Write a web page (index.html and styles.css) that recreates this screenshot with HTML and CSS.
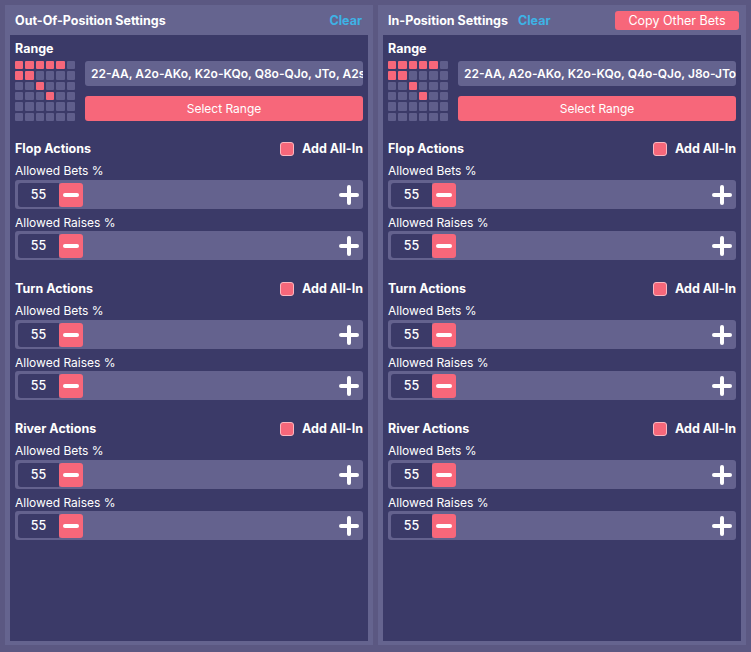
FILE: index.html
```html
<!DOCTYPE html>
<html lang="en">
<head>
    <meta charset="UTF-8">
    <meta name="viewport" content="width=device-width, initial-scale=1.0">
    <title>Solver Settings</title>
    <link rel="stylesheet" href="styles.css">
</head>
<body>
<div class="page">
    <!-- 左侧：OOP -->
    <div class="panel">
        <div class="panel-head">
            <span class="panel-title">Out-Of-Position Settings</span>
            <span class="spacer"></span>
            <a class="clear">Clear</a>
        </div>
        <div class="panel-body">
            <div class="range">
                <div class="label-bold">Range</div>
                <div class="range-row">
                    <div class="mini-grid">
                        <i class="on"></i><i class="on"></i><i class="on"></i><i class="on"></i><i class="on"></i><i></i>
                        <i class="on"></i><i class="on"></i><i></i><i></i><i></i><i></i>
                        <i></i><i></i><i class="on"></i><i></i><i></i><i></i>
                        <i></i><i></i><i></i><i class="on"></i><i></i><i></i>
                        <i></i><i></i><i></i><i></i><i></i><i></i>
                        <i></i><i></i><i></i><i></i><i></i><i></i>
                    </div>
                    <div class="range-side">
                        <div class="range-text"><span>22-AA, A2o-AKo, K2o-KQo, Q8o-QJo, JTo, A2s</span></div>
                        <button class="btn">Select Range</button>
                    </div>
                </div>
            </div>

            <div class="street">
                <div class="street-head">
                    <span class="label-bold">Flop Actions</span>
                    <span class="spacer"></span>
                    <span class="check"></span><span class="label-bold">Add All-In</span>
                </div>
                <div class="field-label">Allowed Bets %</div>
                <div class="stepper"><span class="num">55</span><span class="minus"></span><span class="spacer"></span><span class="plus"></span></div>
                <div class="field-label">Allowed Raises %</div>
                <div class="stepper"><span class="num">55</span><span class="minus"></span><span class="spacer"></span><span class="plus"></span></div>
            </div>

            <div class="street">
                <div class="street-head">
                    <span class="label-bold">Turn Actions</span>
                    <span class="spacer"></span>
                    <span class="check"></span><span class="label-bold">Add All-In</span>
                </div>
                <div class="field-label">Allowed Bets %</div>
                <div class="stepper"><span class="num">55</span><span class="minus"></span><span class="spacer"></span><span class="plus"></span></div>
                <div class="field-label">Allowed Raises %</div>
                <div class="stepper"><span class="num">55</span><span class="minus"></span><span class="spacer"></span><span class="plus"></span></div>
            </div>

            <div class="street">
                <div class="street-head">
                    <span class="label-bold">River Actions</span>
                    <span class="spacer"></span>
                    <span class="check"></span><span class="label-bold">Add All-In</span>
                </div>
                <div class="field-label">Allowed Bets %</div>
                <div class="stepper"><span class="num">55</span><span class="minus"></span><span class="spacer"></span><span class="plus"></span></div>
                <div class="field-label">Allowed Raises %</div>
                <div class="stepper"><span class="num">55</span><span class="minus"></span><span class="spacer"></span><span class="plus"></span></div>
            </div>
        </div>
    </div>

    <!-- 右侧：IP -->
    <div class="panel">
        <div class="panel-head">
            <span class="panel-title">In-Position Settings</span>
            <a class="clear clear-inline">Clear</a>
            <span class="spacer"></span>
            <button class="btn btn-copy">Copy Other Bets</button>
        </div>
        <div class="panel-body">
            <div class="range">
                <div class="label-bold">Range</div>
                <div class="range-row">
                    <div class="mini-grid">
                        <i class="on"></i><i class="on"></i><i class="on"></i><i class="on"></i><i class="on"></i><i></i>
                        <i class="on"></i><i class="on"></i><i></i><i></i><i></i><i></i>
                        <i></i><i></i><i class="on"></i><i></i><i></i><i></i>
                        <i></i><i></i><i></i><i class="on"></i><i></i><i></i>
                        <i></i><i></i><i></i><i></i><i></i><i></i>
                        <i></i><i></i><i></i><i></i><i></i><i></i>
                    </div>
                    <div class="range-side">
                        <div class="range-text"><span>22-AA, A2o-AKo, K2o-KQo, Q4o-QJo, J8o-JTo,</span></div>
                        <button class="btn">Select Range</button>
                    </div>
                </div>
            </div>

            <div class="street">
                <div class="street-head">
                    <span class="label-bold">Flop Actions</span>
                    <span class="spacer"></span>
                    <span class="check"></span><span class="label-bold">Add All-In</span>
                </div>
                <div class="field-label">Allowed Bets %</div>
                <div class="stepper"><span class="num">55</span><span class="minus"></span><span class="spacer"></span><span class="plus"></span></div>
                <div class="field-label">Allowed Raises %</div>
                <div class="stepper"><span class="num">55</span><span class="minus"></span><span class="spacer"></span><span class="plus"></span></div>
            </div>

            <div class="street">
                <div class="street-head">
                    <span class="label-bold">Turn Actions</span>
                    <span class="spacer"></span>
                    <span class="check"></span><span class="label-bold">Add All-In</span>
                </div>
                <div class="field-label">Allowed Bets %</div>
                <div class="stepper"><span class="num">55</span><span class="minus"></span><span class="spacer"></span><span class="plus"></span></div>
                <div class="field-label">Allowed Raises %</div>
                <div class="stepper"><span class="num">55</span><span class="minus"></span><span class="spacer"></span><span class="plus"></span></div>
            </div>

            <div class="street">
                <div class="street-head">
                    <span class="label-bold">River Actions</span>
                    <span class="spacer"></span>
                    <span class="check"></span><span class="label-bold">Add All-In</span>
                </div>
                <div class="field-label">Allowed Bets %</div>
                <div class="stepper"><span class="num">55</span><span class="minus"></span><span class="spacer"></span><span class="plus"></span></div>
                <div class="field-label">Allowed Raises %</div>
                <div class="stepper"><span class="num">55</span><span class="minus"></span><span class="spacer"></span><span class="plus"></span></div>
            </div>
        </div>
    </div>
</div>
</body>
</html>
```

FILE: styles.css
```css
*{margin:0;padding:0;box-sizing:border-box;}
html,body{height:100%;}
body{background:#5b5882;font-family:"Inter","Lato",sans-serif;color:#fff;font-size:13px;}
.page{height:100%;display:flex;gap:5px;padding:5px 5px 7px 5px;}
.spacer{flex:1;}

/* 面板 */
.panel{flex:1 1 0;min-width:0;display:flex;flex-direction:column;background:#65648f;padding:0 5px 4px 5px;}
.panel-head{height:30px;display:flex;align-items:center;padding:0 6px 0 5px;}
.panel-title{font-weight:700;font-size:12.5px;}
.clear{color:#3eb2e5;font-weight:700;font-size:12.5px;cursor:pointer;}
.clear-inline{margin-left:10px;}
.panel-body{flex:1;background:#3b3a68;padding:5px;}

/* 按钮 */
.btn{border:0;background:#f7677a;color:#fff;font-family:inherit;font-size:12px;height:25px;border-radius:3px;cursor:pointer;}
.btn-copy{height:19px;width:124px;font-size:12.5px;margin-right:-4px;}

/* Range */
.label-bold{font-weight:700;font-size:12.5px;line-height:16px;}
.range .label-bold{padding-top:1px;line-height:15px;}
.range-row{display:flex;gap:10px;margin-top:5px;}
.mini-grid{width:60px;height:60px;display:grid;grid-template-columns:repeat(6,1fr);grid-template-rows:repeat(6,1fr);gap:2px;}
.mini-grid i{background:#5f5e8b;border-radius:1px;}
.mini-grid i.on{background:#f7677a;}
.range-side{flex:1;min-width:0;display:flex;flex-direction:column;gap:10px;}
.range-text{height:25px;line-height:25px;background:#64638f;border-radius:3px;padding:0 6px;white-space:nowrap;overflow:hidden;font-weight:600;font-size:12px;}

/* 街 */
.street{margin-top:18px;}
.street + .street{margin-top:19px;}
.street-head{height:18px;display:flex;align-items:center;padding-top:1px;}
.check{width:14px;height:14px;background:#f7677a;border:1px solid #fbb7c0;border-radius:3px;margin-right:8px;}
.field-label{font-size:12px;line-height:15px;margin:6px 0 2px 0;}
.stepper + .field-label{margin-top:6px;margin-bottom:1px;}
.stepper{height:29px;background:#64628e;border-radius:3px;display:flex;align-items:center;padding:0 4px 0 3px;}
.num{width:41px;height:24px;line-height:24px;background:#3b3a68;border-radius:3px 0 0 3px;text-align:center;font-size:12.5px;font-weight:500;}
.minus{width:24px;height:24px;background:#f7677a;border-radius:3px;position:relative;}
.minus::after{content:"";position:absolute;left:4px;top:10px;width:16px;height:4px;border-radius:2px;background:#fff;}
.plus{width:20px;height:20px;position:relative;}
.plus::before,.plus::after{content:"";position:absolute;background:#fff;border-radius:2px;}
.plus::before{left:0;top:8px;width:20px;height:4px;}
.plus::after{left:8px;top:0;width:4px;height:20px;}
```
